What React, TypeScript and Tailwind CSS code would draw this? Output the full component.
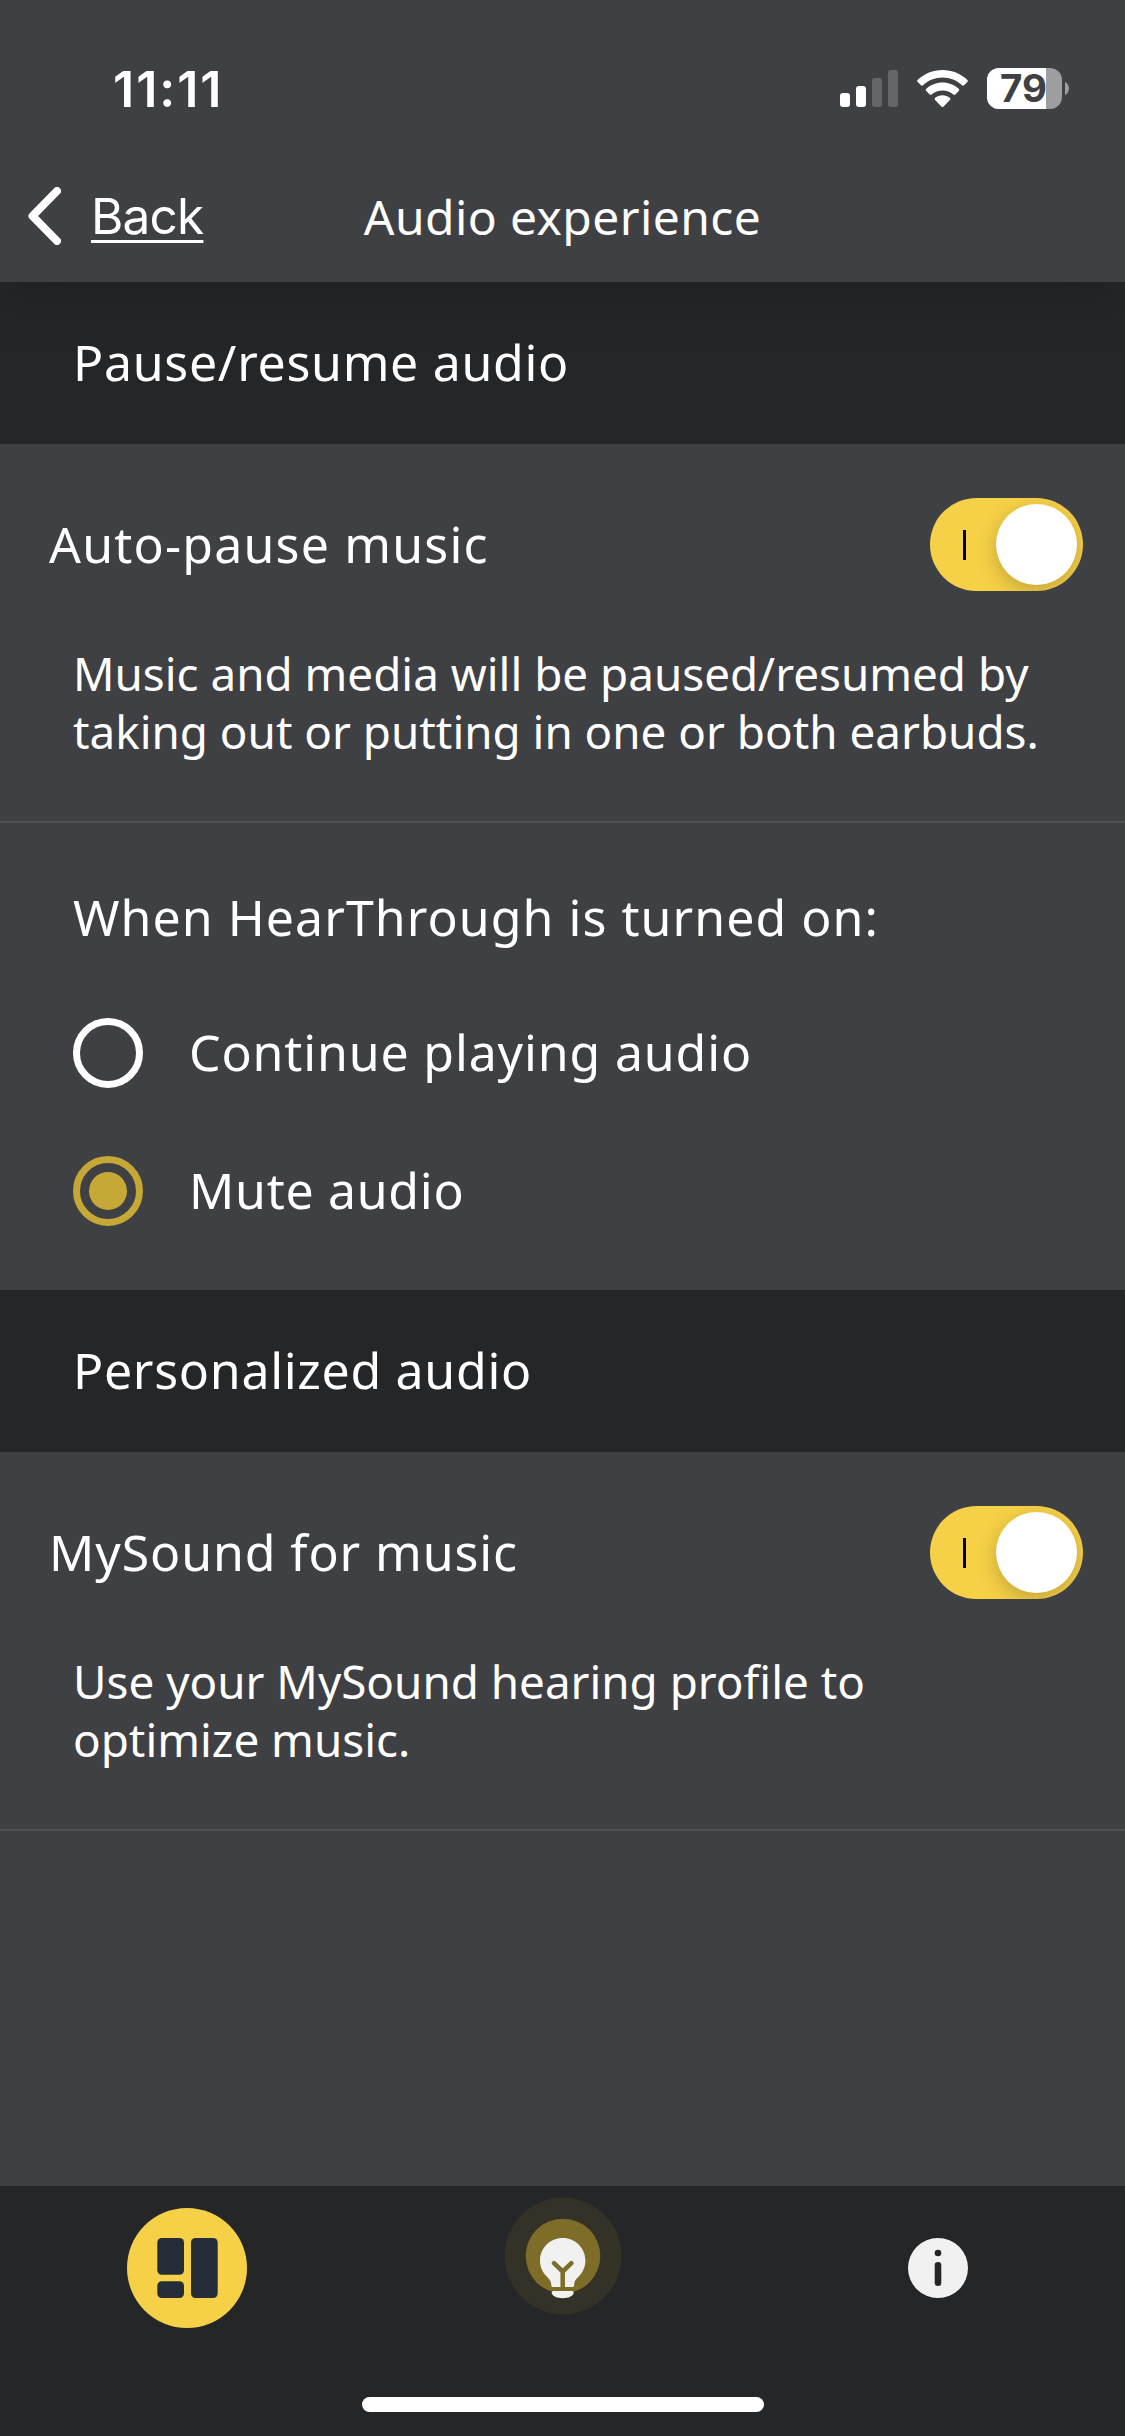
import { useState } from "react";
import type { ReactNode } from "react";
import clsx from "clsx";

type ToggleSettingProps = {
	title: string;
	titleClass: string;
	children: ReactNode;
};

const RADIO_OPTIONS = [
	{ id: "continue", label: "Continue playing audio", tracking: "tracking-[0.85px]" },
	{ id: "mute", label: "Mute audio", tracking: "tracking-[0.7px]" },
];

function SignalIcon() {
	return (
		<svg width="58" height="37" viewBox="0 0 58 37" fill="#fff">
			<rect x="0" y="23" width="10" height="14" rx="3" />
			<rect x="16" y="16" width="10" height="21" rx="3" />
			<rect x="32" y="8" width="10" height="29" rx="3" opacity="0.2" />
			<rect x="48" y="0" width="10" height="37" rx="3" opacity="0.2" />
		</svg>
	);
}

function WifiIcon() {
	return (
		<svg width="51" height="37" viewBox="0 0 51 37" fill="#fff">
			<path d="M25.5 0C35 0 43.7 3.7 50.2 9.700c.8.7.8 1.500.1 2.200l-3.300 3.300c-.6.6-1.400.6-2 0C39.800 10.400 33 7.600 25.500 7.600S11.200 10.400 6 15.200c-.6.6-1.400.6-2 0L.7 11.900c-.7-.7-.7-1.500.1-2.200C7.300 3.700 16 0 25.500 0Z" />
			<path d="M25.5 12.600c6.200 0 11.800 2.300 16.100 6.200.8.7.8 1.500.1 2.200l-3.400 3.400c-.6.6-1.300.6-2 .1-2.900-2.600-6.700-4.100-10.800-4.100s-7.900 1.500-10.800 4.100c-.7.5-1.400.5-2-.1L9.300 21c-.7-.7-.7-1.500.1-2.200 4.300-3.900 9.900-6.200 16.100-6.200Z" />
			<path d="M25.5 25.200c2.800 0 5.300 1 7.300 2.600.7.6.7 1.500.1 2.100l-6.300 6.500c-.6.7-1.600.7-2.200 0l-6.300-6.500c-.6-.6-.6-1.500.1-2.100 2-1.600 4.500-2.600 7.300-2.600Z" />
		</svg>
	);
}

function Battery({ level }: { level: number }) {
	return (
		<div className="flex items-center gap-[3px]">
			<div className="relative h-[41px] w-[75px] rounded-[12px] bg-[#9d9ea0]">
				<div className="h-full rounded-l-[12px] bg-white" style={{ width: `${level}%` }} />
				<span className="absolute -inset-y-1 left-[13px] flex items-center font-[Inter] text-[38.5px] leading-[49px] font-bold text-[#3f4044]">
					{level}
				</span>
			</div>
			<svg width="4" height="13" viewBox="0 0 4 13" fill="#9d9ea0">
				<path d="M0 0c2.400 1.100 4 3.600 4 6.500S2.400 11.900 0 13Z" />
			</svg>
		</div>
	);
}

function Header() {
	return (
		<header className="relative z-10 bg-[#3f4044] pb-7 shadow-[0_8px_60px_rgba(0,0,0,0.2)]">
			<div className="flex h-[177px] items-center justify-between pr-14 pl-[113px]">
				<span className="font-[Inter] text-[50px] leading-none font-semibold tracking-[2px]">11:11</span>
				<div className="flex items-center gap-[19px]">
					<SignalIcon />
					<WifiIcon />
					<Battery level={79} />
				</div>
			</div>
			<div className="grid h-[77px] grid-cols-[1fr_auto_1fr] items-center">
				<a href="#" className="flex items-center gap-[30px] pl-7">
					<svg width="33" height="58" viewBox="0 0 33 58" fill="none">
						<path d="M29 4 4.500 29 29 54" stroke="#fff" strokeWidth="8" strokeLinecap="round" strokeLinejoin="round" />
					</svg>
					<span className="pt-0.5 font-[Inter] text-[49.5px] leading-none tracking-[-0.8px] underline decoration-[3px] underline-offset-[6px]">
						Back
					</span>
				</a>
				<h1 className="pt-0.5 text-[48px] leading-none tracking-[0.4px]">Audio experience</h1>
				<span />
			</div>
		</header>
	);
}

function SectionTitle({ children }: { children: ReactNode }) {
	return (
		<h2 className="flex h-[162px] items-center bg-[#252628] pb-0.5 pl-[73px] text-[50px] leading-none tracking-[0.7px]">
			{children}
		</h2>
	);
}

function ToggleSetting({ title, titleClass, children }: ToggleSettingProps) {
	const [on, setOn] = useState(true);

	return (
		<section className="h-[379px] border-b-2 border-[#515256] pt-[54px]">
			<div className="flex h-[93px] items-center justify-between pr-[42px] pl-[49px]">
				<h3 className={clsx("pb-px text-[50px] leading-none", titleClass)}>{title}</h3>
				<button
					role="switch"
					aria-checked={on}
					aria-label={title}
					onClick={() => setOn(!on)}
					className={clsx(
						"flex h-[93px] w-[153px] items-center overflow-hidden rounded-full px-1.5",
						on ? "justify-between bg-[#f6d147]" : "flex-row-reverse justify-between bg-[#77787c]",
					)}
				>
					<span className="ml-[27px] h-[30px] w-[3px] bg-black" />
					<span className="size-[81px] rounded-full bg-white shadow-[0_6px_20px_rgba(0,0,0,0.22)]" />
				</button>
			</div>
			<p className="mt-[54px] pl-[73px] text-[45.8px] leading-[57.5px]">{children}</p>
		</section>
	);
}

function HearThroughOptions() {
	const [selected, setSelected] = useState("mute");

	return (
		<section className="px-[73px] pt-16 pb-16">
			<h3 className="text-[50px] leading-[60px] tracking-[1.05px]">When HearThrough is turned on:</h3>
			<div className="mt-[71px] flex flex-col gap-[68px]">
				{RADIO_OPTIONS.map((o) => (
					<button
						key={o.id}
						role="radio"
						aria-checked={selected === o.id}
						onClick={() => setSelected(o.id)}
						className="flex h-[70px] items-center gap-[46px] text-left"
					>
						<span
							className={clsx(
								"flex size-[70px] items-center justify-center rounded-full border-[7px]",
								selected === o.id ? "border-[#c5a835]" : "border-white",
							)}
						>
							{selected === o.id && <span className="size-[38px] rounded-full bg-[#c5a835]" />}
						</span>
						<span className={clsx("pb-0.5 text-[50px] leading-none", o.tracking)}>{o.label}</span>
					</button>
				))}
			</div>
		</section>
	);
}

function TabBar() {
	return (
		<nav className="flex h-[250px] flex-col items-center bg-[#252628]">
			<div className="grid w-full grid-cols-3 pt-[11px]">
				<a href="#" aria-label="Dashboard" className="flex justify-center pt-[11px] pr-px">
					<svg width="120" height="120" viewBox="0 0 120 120">
						<circle cx="60" cy="60" r="60" fill="#f6d147" />
						<g fill="#252e38">
							<rect x="30.3" y="30" width="26.7" height="36.7" rx="4.5" />
							<rect x="30.3" y="73.3" width="26.7" height="16.7" rx="4.5" />
							<rect x="64" y="30" width="26.7" height="60" rx="4.5" />
						</g>
					</svg>
				</a>
				<a href="#" aria-label="Tips" className="flex justify-center">
					<svg width="118" height="118" viewBox="0 0 118 118">
						<circle cx="59" cy="59" r="58.5" fill="#343126" />
						<circle cx="59" cy="59" r="37.3" fill="#7d6d29" />
						<path
							d="M58.700 41c-12.600 0-22.700 10-22.700 22.500 0 7 2.800 12.300 7.200 16.500 3 2.900 4.100 4.800 4.100 8.500 0 .9.6 1.500 1.500 1.500h19.800c.9 0 1.500-.6 1.500-1.500 0-3.700 1.100-5.600 4.100-8.500 4.400-4.200 7.200-9.500 7.200-16.500C81.400 51 71.300 41 58.700 41Z"
							fill="#f1f1f1"
						/>
						<path d="M50 66.200l8.700 8.300 8.700-8.300M58.700 74.500v16.500" stroke="#7d6d29" strokeWidth="4.5" strokeLinecap="round" strokeLinejoin="round" fill="none" />
						<path d="M49.400 94h18.600c1.200 0 2 .8 1.700 2-.8 3.200-5.200 5.200-11 5.200s-10.200-2-11-5.200c-.3-1.200.5-2 1.700-2Z" fill="#f1f1f1" />
					</svg>
				</a>
				<a href="#" aria-label="About" className="flex justify-center pt-[41px]">
					<svg width="60" height="60" viewBox="0 0 60 60">
						<circle cx="30" cy="30" r="30" fill="#f1f1f1" />
						<circle cx="30" cy="15" r="3.3" fill="#252628" />
						<rect x="26.7" y="24" width="6.6" height="24" rx="3.3" fill="#252628" />
					</svg>
				</a>
			</div>
			<div className="mt-auto mb-6 h-[15px] w-[402px] rounded-full bg-white" />
		</nav>
	);
}

export default function App() {
	return (
		<div className="flex h-[2436px] w-[1125px] flex-col overflow-hidden bg-[#3f4044] font-['Noto_Sans',sans-serif] text-white">
			<Header />
			<main className="flex-1">
				<SectionTitle>Pause/resume audio</SectionTitle>
				<ToggleSetting title="Auto-pause music" titleClass="tracking-[1.2px]">
					Music and media will be paused/resumed by
					<br />
					taking out or putting in one or both earbuds.
				</ToggleSetting>
				<HearThroughOptions />
				<SectionTitle>Personalized audio</SectionTitle>
				<ToggleSetting title="MySound for music" titleClass="tracking-[0.9px]">
					Use your MySound hearing profile to
					<br />
					optimize music.
				</ToggleSetting>
			</main>
			<TabBar />
		</div>
	);
}
